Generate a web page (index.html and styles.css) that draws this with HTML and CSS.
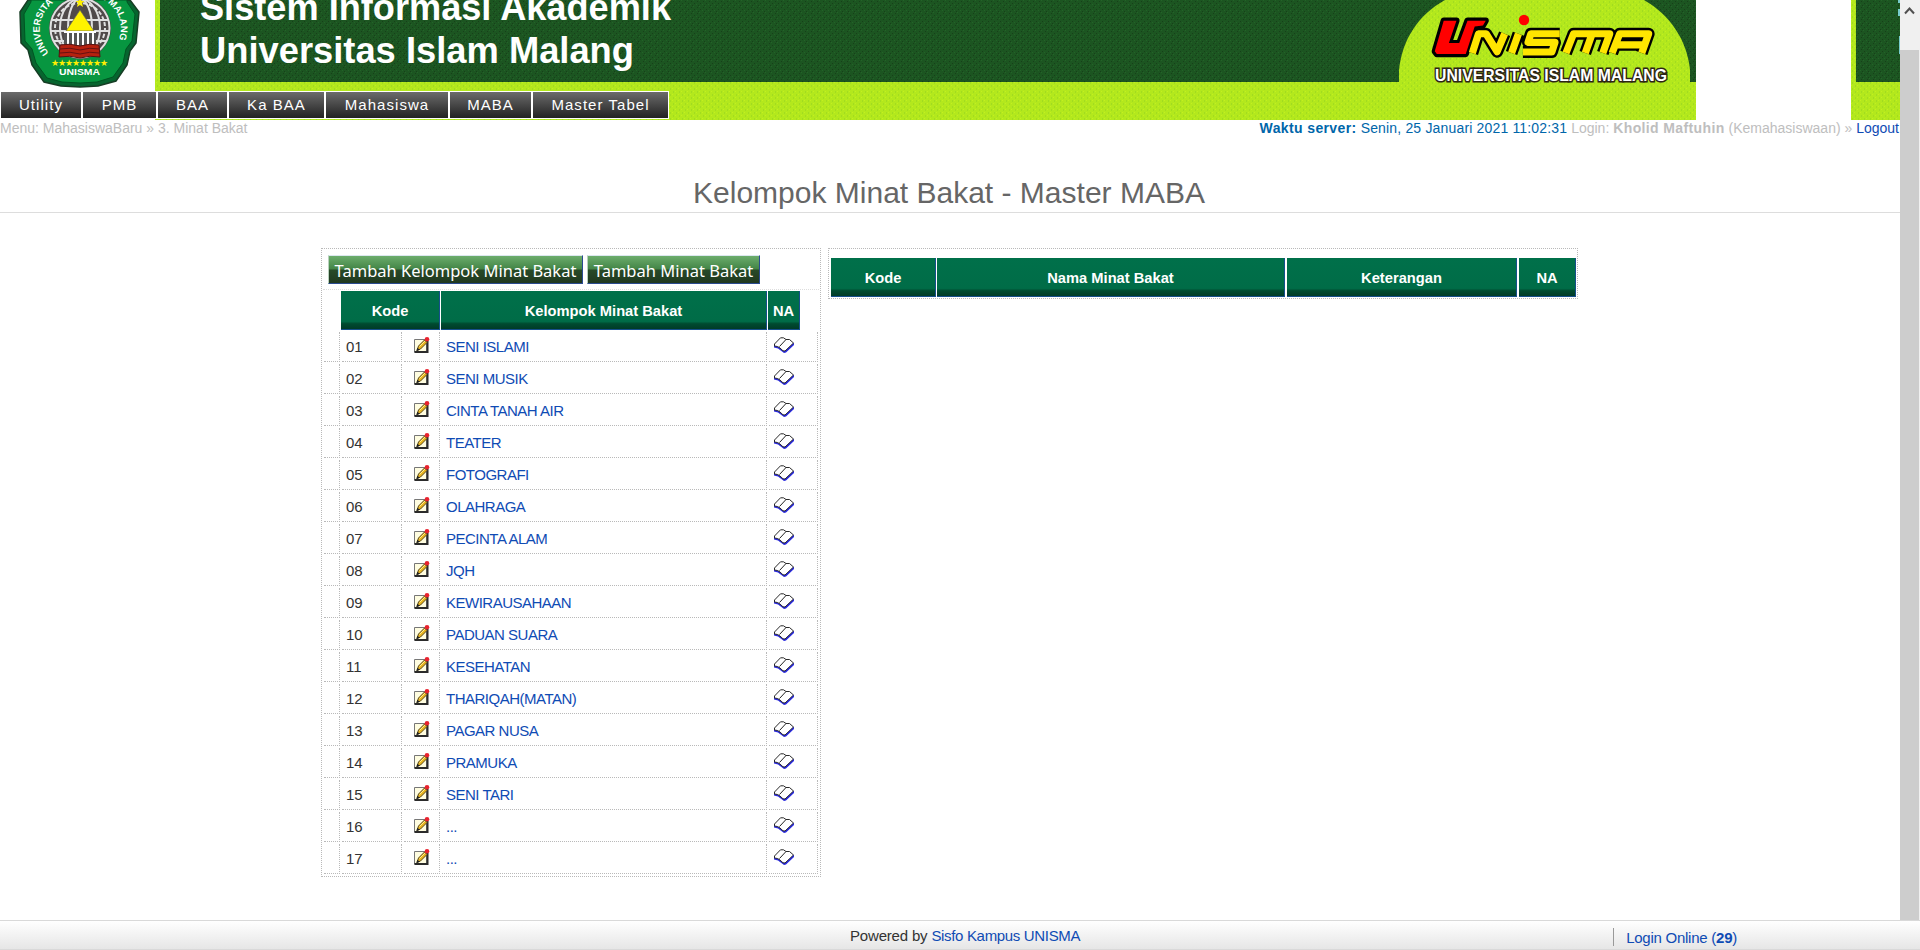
FILE: index.html
```html
<!DOCTYPE html>
<html lang="id">
<head>
<meta charset="utf-8">
<title>Kelompok Minat Bakat - Master MABA</title>
<link rel="stylesheet" href="styles.css">
</head>
<body>
<svg class="defs" width="0" height="0">
<symbol id="edit" viewBox="0 0 16 16"><path d="M.5 2.500h12v12.500H.5z" fill="#fffde0" stroke="#777"/><path d="M.5 15h13V4" fill="none" stroke="#2b2b2b" stroke-width="2"/><path d="M3 13.500l1.500-4.500L10.500 3l2.500 2.500-6.500 6.500z" fill="#eab51e" stroke="#5a4818"/><path d="M5.500 9.500l6-6" stroke="#ffee90" stroke-width="1"/><path d="M2.300 14.200l1-3.500 2.500 2z" fill="#222"/><circle cx="13" cy="2.300" r="2.300" fill="#e8222e"/></symbol>
<symbol id="book" viewBox="0 0 20 16"><path d="M0 8v2.500l4 1 6 4.500 2-.5 8-7.500V6z" fill="#2828e0"/><path d="M.5 7L6.500.8l3 0 2.500 1.700 3.500 0 4 3.500-8.500 8-2-.2-3-2.800-2.500-1.500-3-.5z" fill="#fff" stroke="#2b2b2b"/><path d="M5.500 9.500L12 2.500" stroke="#222"/></symbol>
</svg>
<div class="view">
<div class="page">
<header class="banner">
<svg class="art" width="1900" height="120" viewBox="0 0 1900 120">
<defs>
<pattern id="dk" width="6" height="6" patternUnits="userSpaceOnUse"><path d="M0 0h6v6H0z" fill="#1c5521"/><path d="M1 1h1v1H1zM4 3h1v1H4zM2 5h1v1H2z" fill="#174019"/><path d="M3 0h1v1H3zM0 4h1v1H0z" fill="#236328"/></pattern>
<pattern id="lm" width="6" height="6" patternUnits="userSpaceOnUse"><path d="M0 0h6v6H0z" fill="#b3e81d"/><path d="M1 1h1v2H1zM4 4h1v2H4z" fill="#a2dc20"/><path d="M3 1h1v1H3zM0 4h1v1H0z" fill="#c3f01f"/></pattern>
</defs>
<rect x="155" width="1541" height="120" fill="url(#lm)"/><rect x="160" width="1536" height="82" fill="url(#dk)"/>
<path d="M1399 83V70C1402 40 1418 15 1445 0h199C1670 15 1687 40 1690 70v13z" fill="url(#lm)"/>
<rect x="1851" width="49" height="120" fill="url(#lm)"/><rect x="1856" width="44" height="82" fill="url(#dk)"/>
<path d="M1900 0h-2v3h2zM1900 9h-2v7h2zM1900 36h-1v18h1z" fill="#7cc"/>
<g class="title"><text x="200" y="20" textLength="471" lengthAdjust="spacingAndGlyphs">Sistem Informasi Akademik</text><text x="200" y="62.500" textLength="434" lengthAdjust="spacingAndGlyphs">Universitas Islam Malang</text></g>
<path d="M20 12L28 0H130L139 12L136 43L130 51L127 65L116 81L98 86L80 87L61 86L44 82L32 65L28 50L21 43Z" fill="#07652f" stroke="#163d24" stroke-width="1.500"/>
<path d="M24 14L31 2V0H127V2L135 14L132 41L126 49L123 63L113 77L97 82L80 83L62 82L47 78L36 63L32 49L25 41Z" fill="#079640" stroke="#052" stroke-width="1"/>
<circle cx="80" cy="28" r="31" fill="#504a4a"/>
<g fill="none" stroke="#e0e0e0" stroke-width="2"><circle cx="80" cy="28" r="29.500"/><circle cx="80" cy="28" r="25" stroke-dasharray="4 2"/><ellipse cx="80" cy="28" rx="20" ry="29"/><ellipse cx="80" cy="28" rx="12" ry="29"/><path d="M51 20h58M50 31h60M53 41h54"/></g>
<path d="M80 10l14 21H66z" fill="#fff200" stroke="#665" stroke-width=".7"/><path d="M80-2l1.500 3h3L82 3l1 4-3-2-3 2 1-4-2.500-2h3z" fill="#fff200"/>
<path d="M64 31h32v15H64z" fill="#555"/><path d="M64 32h32M68 33v12m5-12v12m5-12v12m5-12v12m5-12v12m5-12v12" stroke="#fff" stroke-width="2"/>
<path d="M60 45q10-2 20 1q10-3 19-1l1 12q-10-2-20 1q-10-3-21-1z" fill="#b5210f" stroke="#511"/><path d="M60 49q10-2 20 1q10-3 19-1M60 53q10-2 20 1q10-3 19-1" fill="none" stroke="#611"/>
<text class="stars" x="51" y="66" textLength="57">★★★★★★★★</text>
<text class="seal" x="59" y="74.500" textLength="41" lengthAdjust="spacingAndGlyphs">UNISMA</text>
<path id="arcl" d="M49 53C34 35 36 8 66-5" fill="none"/><path id="arcr" d="M95-5C124 8 127 32 112 53" fill="none"/>
<text class="ring"><textPath href="#arcl">UNIVERSITA</textPath></text><text class="ring"><textPath href="#arcr" startOffset="4">M MALANG</textPath></text>
<g transform="translate(1380 0) scale(.3444)" fill="none" stroke-linejoin="round">
<g stroke="#000" stroke-width="35"><path d="M185 60h37l-22 65h30l24-65h53l-8 14-24 3-26 80h-84l-6-8z" stroke-width="18" fill="#000"/><path d="M268 154l18-56h22l32 52 22-52M382 154l20-56M522 98h-84l-8 25h78l-9 28h-84M540 154l22-56h105l-20 56M616 98l-20 56M674 154l22-56h84l-20 56M684 130h78"/></g>
<path d="M185 60h37l-22 65h30l24-65h53l-8 14-24 3-26 80h-84l-6-8z" fill="#f00"/>
<path d="M268 154l18-56h22l32 52 22-52M382 154l20-56M522 98h-84l-8 25h78l-9 28h-84M540 154l22-56h105l-20 56M616 98l-20 56M674 154l22-56h84l-20 56M684 130h78" stroke="#ffe500" stroke-width="21"/>
</g>
<circle cx="1524" cy="20" r="5.200" fill="#f00"/>
<text class="uni" x="1435" y="80.500" textLength="232" lengthAdjust="spacingAndGlyphs">UNIVERSITAS ISLAM MALANG</text>
</svg>
<nav class="menu"><a class="m1">Utility</a><a class="m2">PMB</a><a class="m3">BAA</a><a class="m4">Ka BAA</a><a class="m5">Mahasiswa</a><a class="m6">MABA</a><a class="m7">Master Tabel</a></nav>
</header>
<div class="status"><span>Menu: MahasiswaBaru » 3. Minat Bakat</span><span><span class="time"><b>Waktu server:</b> Senin, 25 Januari 2021 11:02:31</span> Login: <b>Kholid Maftuhin</b> (Kemahasiswaan) » <a>Logout</a></span></div>
<h1>Kelompok Minat Bakat - Master MABA</h1>
<main class="panels">
<section class="left">
<div class="actions"><button class="b1">Tambah Kelompok Minat Bakat</button><button class="b2">Tambah Minat Bakat</button></div>
<div class="head lhead"><b>Kode</b><b>Kelompok Minat Bakat</b><b>NA</b></div>
<div class="rows">
<div class="row"><i></i><span>01</span><i><svg class="ed"><use href="#edit"/></svg></i><a>SENI ISLAMI</a><i><svg class="bk"><use href="#book"/></svg></i></div>
<div class="row"><i></i><span>02</span><i><svg class="ed"><use href="#edit"/></svg></i><a>SENI MUSIK</a><i><svg class="bk"><use href="#book"/></svg></i></div>
<div class="row"><i></i><span>03</span><i><svg class="ed"><use href="#edit"/></svg></i><a>CINTA TANAH AIR</a><i><svg class="bk"><use href="#book"/></svg></i></div>
<div class="row"><i></i><span>04</span><i><svg class="ed"><use href="#edit"/></svg></i><a>TEATER</a><i><svg class="bk"><use href="#book"/></svg></i></div>
<div class="row"><i></i><span>05</span><i><svg class="ed"><use href="#edit"/></svg></i><a>FOTOGRAFI</a><i><svg class="bk"><use href="#book"/></svg></i></div>
<div class="row"><i></i><span>06</span><i><svg class="ed"><use href="#edit"/></svg></i><a>OLAHRAGA</a><i><svg class="bk"><use href="#book"/></svg></i></div>
<div class="row"><i></i><span>07</span><i><svg class="ed"><use href="#edit"/></svg></i><a>PECINTA ALAM</a><i><svg class="bk"><use href="#book"/></svg></i></div>
<div class="row"><i></i><span>08</span><i><svg class="ed"><use href="#edit"/></svg></i><a>JQH</a><i><svg class="bk"><use href="#book"/></svg></i></div>
<div class="row"><i></i><span>09</span><i><svg class="ed"><use href="#edit"/></svg></i><a>KEWIRAUSAHAAN</a><i><svg class="bk"><use href="#book"/></svg></i></div>
<div class="row"><i></i><span>10</span><i><svg class="ed"><use href="#edit"/></svg></i><a>PADUAN SUARA</a><i><svg class="bk"><use href="#book"/></svg></i></div>
<div class="row"><i></i><span>11</span><i><svg class="ed"><use href="#edit"/></svg></i><a>KESEHATAN</a><i><svg class="bk"><use href="#book"/></svg></i></div>
<div class="row"><i></i><span>12</span><i><svg class="ed"><use href="#edit"/></svg></i><a>THARIQAH(MATAN)</a><i><svg class="bk"><use href="#book"/></svg></i></div>
<div class="row"><i></i><span>13</span><i><svg class="ed"><use href="#edit"/></svg></i><a>PAGAR NUSA</a><i><svg class="bk"><use href="#book"/></svg></i></div>
<div class="row"><i></i><span>14</span><i><svg class="ed"><use href="#edit"/></svg></i><a>PRAMUKA</a><i><svg class="bk"><use href="#book"/></svg></i></div>
<div class="row"><i></i><span>15</span><i><svg class="ed"><use href="#edit"/></svg></i><a>SENI TARI</a><i><svg class="bk"><use href="#book"/></svg></i></div>
<div class="row"><i></i><span>16</span><i><svg class="ed"><use href="#edit"/></svg></i><a>...</a><i><svg class="bk"><use href="#book"/></svg></i></div>
<div class="row"><i></i><span>17</span><i><svg class="ed"><use href="#edit"/></svg></i><a>...</a><i><svg class="bk"><use href="#book"/></svg></i></div>
</div>
</section>
<section class="right"><div class="head rhead"><b>Kode</b><b>Nama Minat Bakat</b><b>Keterangan</b><b>NA</b></div></section>
</main>
</div>
<div class="scroll"><svg width="19" height="50"><path d="M5 13.500l4.500-5 4.500 5" fill="none" stroke="#505050" stroke-width="2"/></svg><div class="thumb"></div></div>
</div>
<footer><span class="pow">Powered by <a>Sisfo Kampus UNISMA</a></span><a class="online">Login Online (<b>29</b>)</a></footer>
</body>
</html>
```
FILE: styles.css
```css
* { box-sizing: border-box; }
body { margin: 0; height: 950px; overflow: hidden; background: #fff; color: #333; font: 15px/18px "Liberation Sans", Arial, sans-serif; }
a { color: #0f4bb4; }
.defs { position: absolute; }
.view { display: flex; height: 920px; }
.page { width: 1900px; flex: none; }
.banner { display: grid; height: 120px; }
.art, .menu { grid-area: 1 / 1; }
.title { font-size: 37px; font-weight: bold; fill: #fff; }
.stars { font: 9px "DejaVu Sans", sans-serif; fill: #ffee00; }
.seal { font-size: 9px; font-weight: bold; fill: #fff; }
.ring { font-size: 9.500px; font-weight: bold; fill: #fff; }
.uni { font-size: 17px; font-weight: bold; fill: #fff; stroke: #2c2414; stroke-width: 3px; paint-order: stroke; }
.menu { display: flex; align-self: end; height: 28px; margin-bottom: 1px; z-index: 1; }
.menu a { border: 1px solid #fff; background: linear-gradient(#6b6b6b, #222); color: #fff; letter-spacing: 1.05px; line-height: 25px; text-align: center; }
.m1 { width: 82px; }
.m2 { width: 75px; }
.m3 { width: 71px; }
.m4 { width: 97px; }
.m5 { width: 124px; }
.m6 { width: 83px; }
.m7 { width: 137px; }
.status { display: flex; justify-content: space-between; height: 18px; padding-right: 1px; color: #bebebe; font-size: 14px; line-height: 17px; white-space: nowrap; }
.status b { letter-spacing: .38px; }
.time { color: #06a; letter-spacing: .17px; }
h1 { margin: 36px 0 0; height: 39px; padding-right: 2px; border-bottom: 1px solid #ddd; text-align: center; font-size: 30px; font-weight: normal; line-height: 37px; color: #666; }
.panels { display: flex; align-items: flex-start; gap: 7px; margin: 35px 0 0 321px; }
.left { width: 500px; height: 629px; border: 1px dotted #b9b9b9; padding: 1px; }
.actions { display: flex; gap: 4px; height: 40px; padding: 5px 0 0 5px; border-bottom: 1px dotted #ddd; }
button { height: 29px; padding: 1px 0 0; border: 1px solid #2a4b91; border-color: #dce8ef #2a4b91 #2a4b91 #b9d1bd; background: linear-gradient(#6cad6c, #438547 48%, #284a28 52%, #203820); color: #fff; font: 16.500px/25px "Noto Sans", sans-serif; white-space: nowrap; }
.b1 { width: 255px; }
.b2 { width: 173px; }
.head { display: grid; grid-template-rows: 39px; height: 39px; color: #fff; text-align: center; line-height: 41px; font-size: 14.700px; }
.head b { height: 39px; border: solid #164f8c; border-width: 0 1px 1px 0; background: linear-gradient(#00704a 0, #006c47 80%, #004b30 86%, #003b27); }
.lhead { grid-template-columns: 99px 326px 32px; gap: 1px; margin: 1px 0 0 18px; }
.rows { display: grid; gap: 2px; padding: 2px 1px 0; }
.row { display: grid; grid-template-columns: 16px 60px 36px 325px 49px; grid-template-rows: 30px; gap: 2px; height: 30px; }
.row > * { border: dotted #b9b9b9; border-width: 0 1px 1px 0; line-height: 29px; padding-left: 4px; }
.row > a { letter-spacing: -.5px; }
.row > :nth-child(3) { padding: 5px 0 0 10px; }
.row > :nth-child(5) { padding: 5px 0 0 5px; }
.ed { display: block; width: 16px; height: 16px; }
.bk { display: block; width: 20px; height: 16px; }
.right { width: 750px; height: 51px; border: 1px dotted #b9b9b9; padding: 9px 0 0 2px; }
.rhead { grid-template-columns: 104px 348px 230px 57px; column-gap: 2px; }
.rhead b:first-child { margin-right: -1px; }
.scroll { width: 20px; background: #f0f0f0; padding-right: 1px; }
.scroll svg { display: block; }
.thumb { height: 870px; background: #cdcdcd; }
footer { display: flex; justify-content: space-between; height: 30px; border: solid #d9d9d9; border-width: 1px 0; background: linear-gradient(#fff, #e6e6e6); padding: 7px 183px 0 850px; }
.pow { line-height: 16px; letter-spacing: -.18px; }
.pow a { letter-spacing: -.33px; }
.online { height: 18px; line-height: 19px; border-left: 1px solid #999; padding-left: 12px; letter-spacing: -.25px; }
```
